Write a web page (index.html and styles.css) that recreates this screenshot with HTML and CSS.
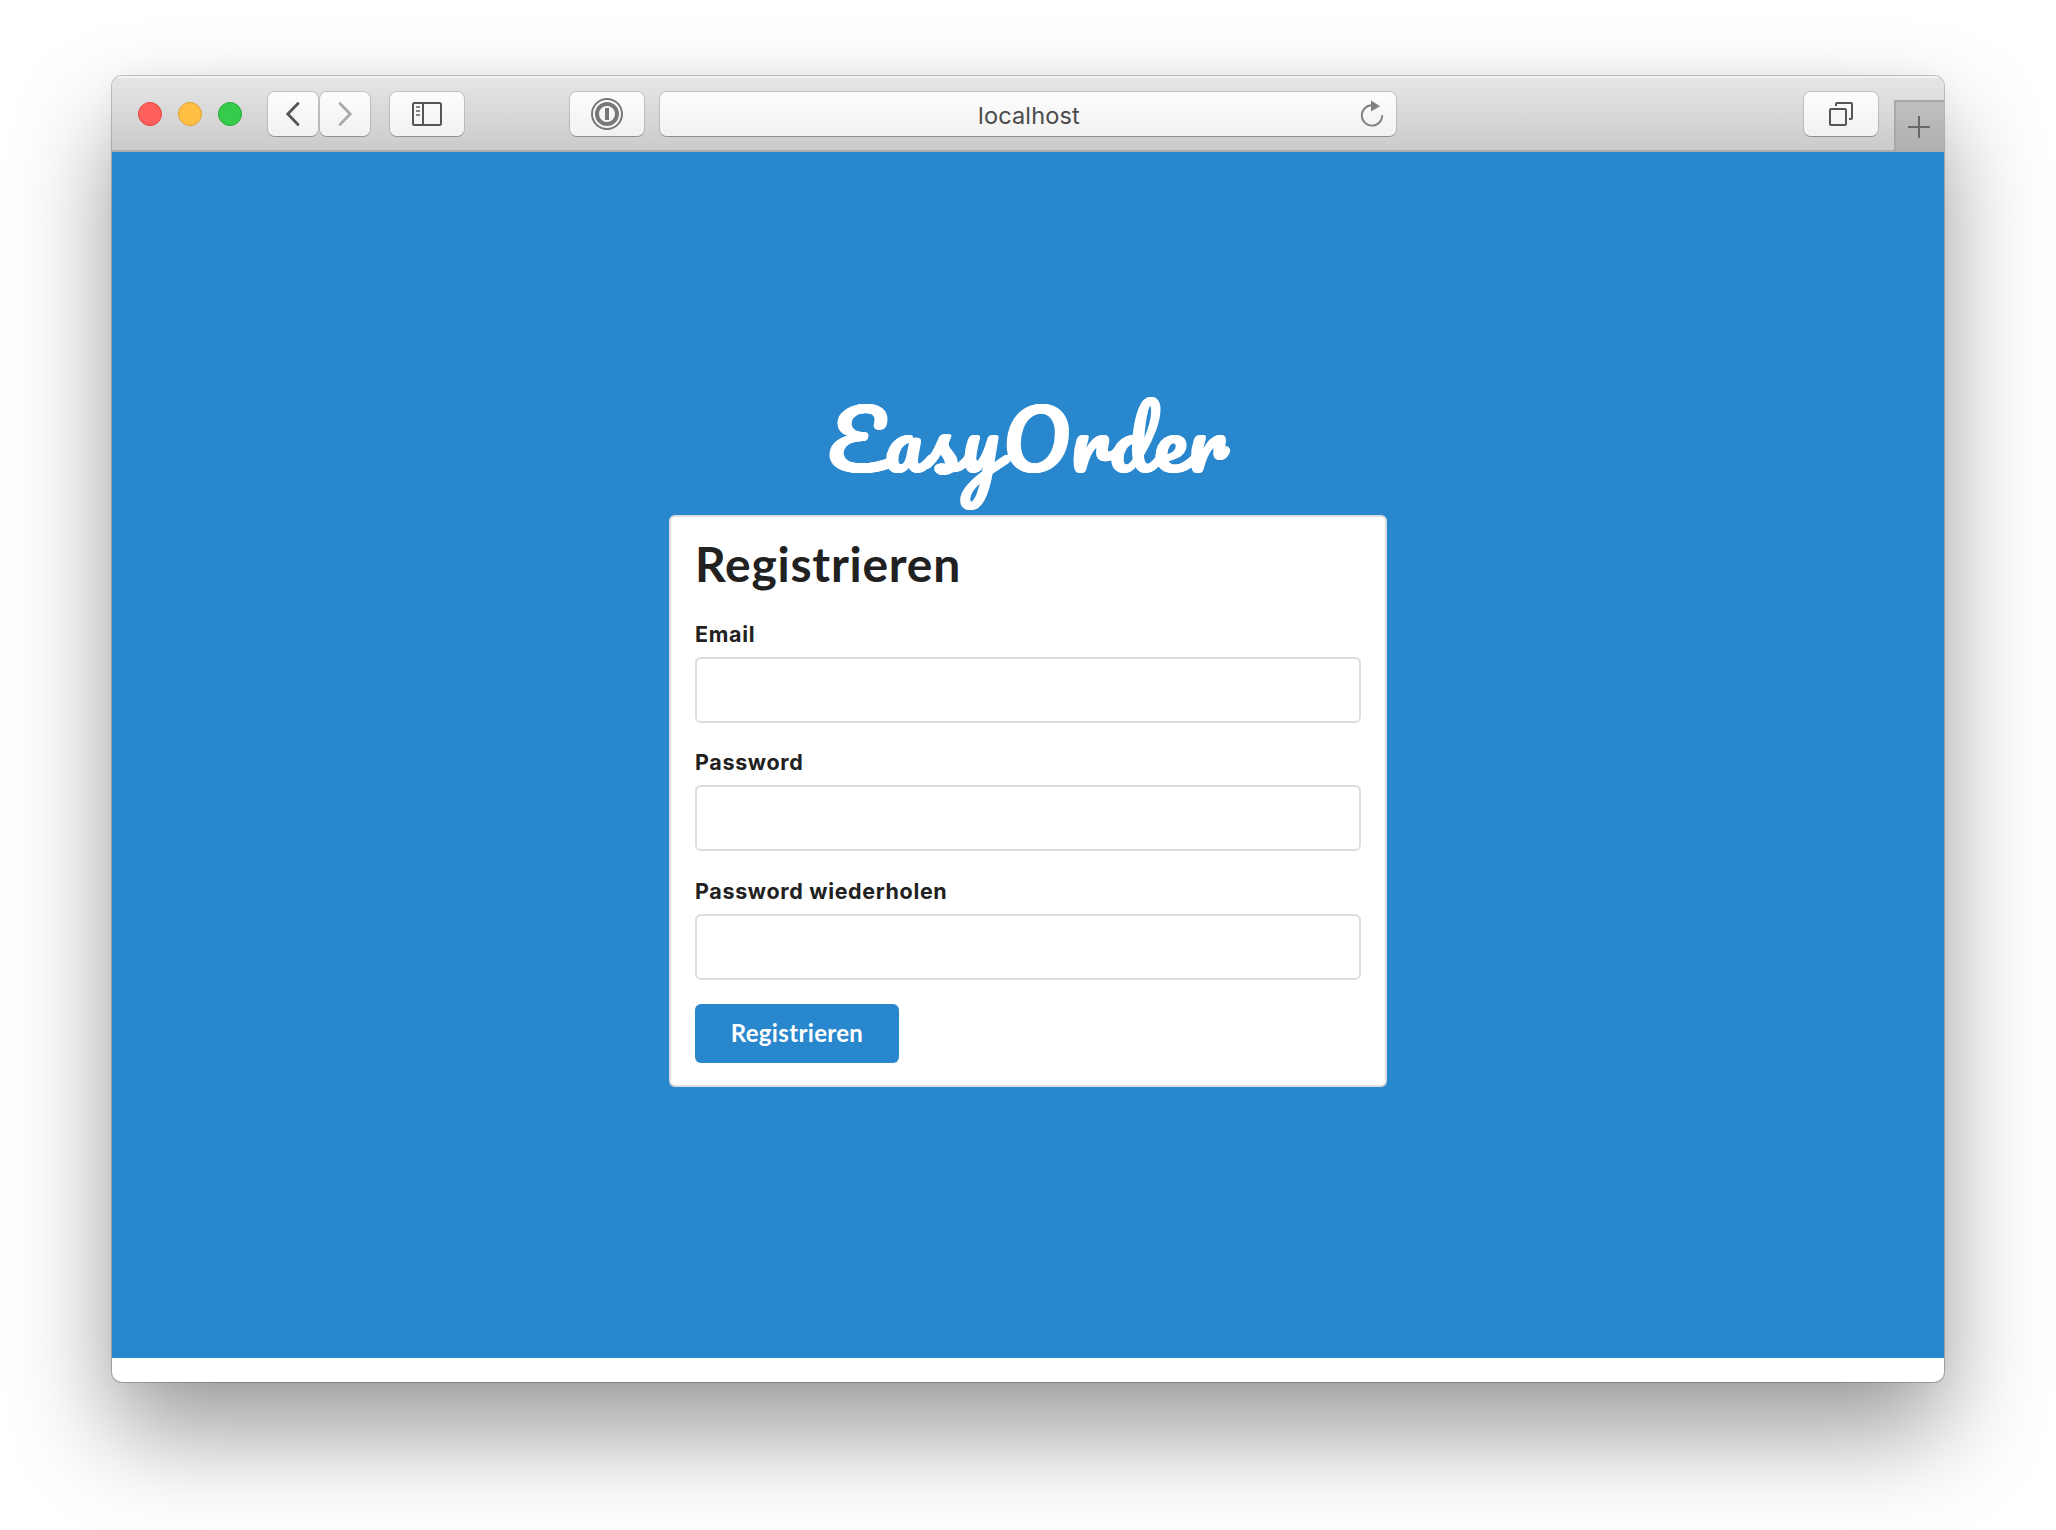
FILE: index.html
```html
<!DOCTYPE html>
<html lang="de">
<head>
<meta charset="utf-8">
<title>EasyOrder</title>
<link rel="stylesheet" href="styles.css">
</head>
<body>
<div class="window">
  <header class="toolbar">
    <div class="lights">
      <span class="light light-close"></span>
      <span class="light light-min"></span>
      <span class="light light-max"></span>
    </div>
    <div class="nav">
      <div class="tool tool-nav"><svg width="50" height="44" viewBox="0 0 50 44" fill="none" stroke="#555" stroke-width="2.8" stroke-linecap="round" stroke-linejoin="miter"><path d="M30 11.500L19.800 22 30 32.500"/></svg></div>
      <div class="tool tool-nav"><svg width="50" height="44" viewBox="0 0 50 44" fill="none" stroke="#aaa" stroke-width="2.800" stroke-linecap="round"><path d="M20 11.500L30.200 22 20 32.500"/></svg></div>
    </div>
    <div class="tool tool-sidebar"><svg width="30" height="24" viewBox="0 0 30 24" fill="none" stroke="#555" stroke-width="2"><rect x="1" y="1" width="28" height="22" rx="1.500"/><path d="M11 1v22"/><path d="M4 5h4M4 9h4M4 13h4" stroke="#888"/></svg></div>
    <div class="tool tool-password"><svg width="32" height="32" viewBox="0 0 32 32" fill="none" stroke="#787878"><circle cx="16" cy="16" r="15" stroke-width="2"/><circle cx="16" cy="16" r="10" stroke-width="4"/><path d="M16 10v12" stroke-width="4"/></svg></div>
    <div class="tool address">
      <span class="url">localhost</span>
      <svg class="reload" width="24" height="28" viewBox="0 0 24 28"><path d="M12 5.200A10.200 10.200 0 1 0 22.200 15.200" fill="none" stroke="#808080" stroke-width="1.900"/><path d="M11 .5L20 6.200 11 11.500z" fill="#808080"/></svg>
    </div>
    <div class="tool tool-tabs"><svg width="24" height="24" viewBox="0 0 24 24" fill="none" stroke="#555" stroke-width="2"><rect x="1" y="7" width="16" height="16" rx="1"/><path d="M7 4V2q0-1 1-1h14q1 0 1 1v14q0 1-1 1h-2"/></svg></div>
    <div class="new-tab"><svg width="22" height="22" viewBox="0 0 22 22"><path d="M11 0v22M0 11h22" stroke="#666" stroke-width="2"/></svg></div>
  </header>
  <main class="page">
    <h1 class="logo">EasyOrder</h1>
    <form class="card">
      <h2 class="title">Registrieren</h2>
      <div class="field"><label class="label" for="email">Email</label><input class="input" id="email" type="email"></div>
      <div class="field"><label class="label" for="pw">Password</label><input class="input" id="pw" type="password"></div>
      <div class="field"><label class="label" for="pw2">Password wiederholen</label><input class="input" id="pw2" type="password"></div>
      <button class="submit" type="button">Registrieren</button>
    </form>
  </main>
</div>
</body>
</html>
```
FILE: styles.css
```css
* { box-sizing: border-box; }

body {
  margin: 0;
  height: 1530px;
  padding: 76px 112px 0;
  overflow: hidden;
  background: #fff;
}

.window {
  width: 1832px;
  height: 1306px;
  border-radius: 10px;
  background: #fff;
  overflow: hidden;
  box-shadow: 0 0 0 1px rgba(0, 0, 0, .22), 0 50px 100px rgba(0, 0, 0, .4), 0 0 30px rgba(0, 0, 0, .03);
}

.toolbar {
  display: flex;
  align-items: flex-start;
  height: 76px;
  padding-top: 16px;
  border-bottom: 2px solid #adadad;
  background: linear-gradient(#e6e6e6, #cbcbcb);
  box-shadow: inset 0 2px 0 #f2f2f2;
}

.lights {
  display: flex;
  gap: 16px;
  margin: 10px 0 0 26px;
}

.light {
  width: 24px;
  height: 24px;
  border-radius: 50%;
  border: 1px solid;
}

.light-close { background: #ff605c; border-color: #e2453f; }
.light-min { background: #ffbf42; border-color: #e0a033; }
.light-max { background: #35cb4b; border-color: #24ab36; }

.nav {
  display: flex;
  gap: 2px;
  margin-left: 26px;
}

.tool {
  display: flex;
  align-items: center;
  justify-content: center;
  height: 44px;
  border-radius: 7px;
  background: linear-gradient(#fdfdfd, #f1f1f1);
  box-shadow: 0 0 0 1px rgba(0, 0, 0, .13), 0 1px 0 rgba(0, 0, 0, .2);
}

.tool-nav { width: 50px; }
.tool-sidebar { width: 74px; margin-left: 20px; }
.tool-password { width: 74px; margin-left: 106px; }

.address {
  position: relative;
  width: 736px;
  margin-left: 16px;
}

.url {
  font: 400 23.500px/44px Inter, sans-serif;
  letter-spacing: .15px;
  color: #4a4a4a;
  padding: 3px 0 0 2px;
}

.reload {
  position: absolute;
  right: 12px;
  top: 8px;
}

.tool-tabs { width: 74px; margin-left: 408px; }

.new-tab {
  display: flex;
  align-items: center;
  justify-content: center;
  width: 50px;
  height: 50px;
  margin: 8px 0 0 16px;
  padding: 2px 2px 0 0;
  border: solid #a8a8a8;
  border-width: 2px 0 0 2px;
  background: linear-gradient(#bfbfbf, #b0b0b0);
}

.page {
  display: flex;
  flex-direction: column;
  align-items: center;
  height: 1206px;
  padding-top: 225px;
  background: #2987cd;
}

.logo {
  height: 138px;
  margin: 0;
  font: 400 82px/122px Pacifico, cursive;
  font-feature-settings: "liga" 1, "clig" 1, "calt" 1;
  letter-spacing: 1.800px;
  text-shadow: 1px 0 #fff, 2px 0 #fff;
  color: #fff;
}

.card {
  width: 718px;
  height: 572px;
  padding: 20px 24px;
  border: 2px solid #ddd;
  border-radius: 6px;
  background: #fff;
}

.title {
  height: 80px;
  margin: 0;
  font: 700 48px/54px Lato, sans-serif;
  letter-spacing: .75px;
  color: #212121;
}

.field {
  display: flex;
  flex-direction: column;
  height: 128.400px;
}

.label {
  height: 40px;
  font: 700 21.500px/34px Inter, sans-serif;
  letter-spacing: .66px;
  color: #212121;
}

.input {
  width: 666px;
  height: 66px;
  border: 2px solid #ddd;
  border-radius: 6px;
  background: #fff;
}

.submit {
  display: block;
  width: 204px;
  height: 59px;
  margin-top: 1.800px;
  padding: 0;
  border: 0;
  border-radius: 6px;
  font: 700 24px/58px Lato, sans-serif;
  letter-spacing: .33px;
  color: #fff;
  background: #2987cd;
}
```
